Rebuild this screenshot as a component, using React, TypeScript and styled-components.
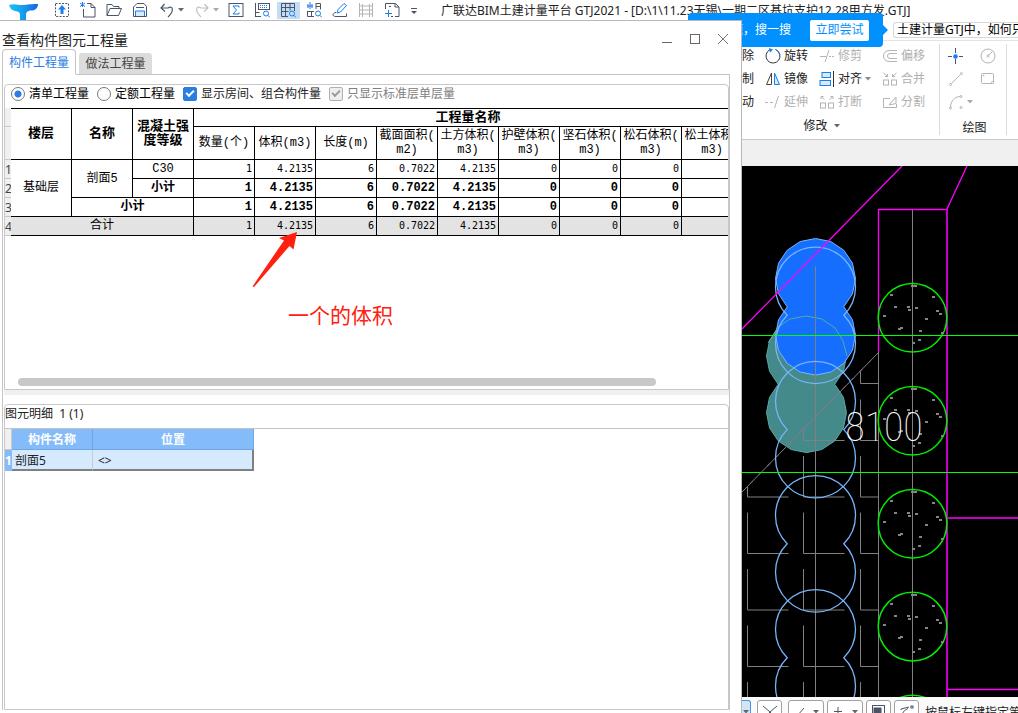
import React from "react";
import styled, { createGlobalStyle, css } from "styled-components";

const GlobalStyle = createGlobalStyle`
  *, *::before, *::after { box-sizing: border-box; }
  html, body { margin: 0; height: 100%; }
  body {
    overflow: hidden;
    background: #fff;
    color: #222;
    font: 12px/16px "Noto Sans", "Noto Sans CJK SC", sans-serif;
  }
  button, input { font: inherit; color: inherit; margin: 0; padding: 0; }
  svg { display: block; flex: none; }
`;

/* ---------- window shell ---------- */

const Shell = styled.div`
  display: flex;
  flex-direction: column;
  height: 100vh;
  overflow: hidden;
`;

const TitleBar = styled.header`
  display: flex;
  flex: none;
  height: 20px;
  padding-left: 9px;
  white-space: nowrap;
`;

const LogoBox = styled.div`
  width: 40px;
  padding-top: 4px;
`;

const BarButton = styled.button<{ $on?: boolean; $split?: boolean; $narrow?: boolean }>`
  display: flex;
  flex: none;
  align-items: center;
  justify-content: ${(p) => (p.$split ? "flex-start" : "center")};
  gap: 3px;
  width: ${(p) => (p.$split ? 35 : p.$narrow ? 18 : 26)}px;
  height: 20px;
  padding-left: ${(p) => (p.$split ? 6 : 0)}px;
  border: 0;
  background: ${(p) =>
    p.$on ? "linear-gradient(#c4ddf5, #c4ddf5) center / 23px 17px no-repeat" : "none"};
`;

const FileTitle = styled.h1`
  margin: 0 0 0 18px;
  font-size: 12px;
  font-weight: 400;
  line-height: 22px;
`;

const Body = styled.div`
  display: grid;
  flex: 1;
  min-height: 0;
  grid-template-columns: minmax(0, 742fr) minmax(276px, 276fr);
`;

/* ---------- quantity dialog ---------- */

const Dialog = styled.section`
  position: relative;
  z-index: 2;
  display: flex;
  flex-direction: column;
  min-width: 0;
  min-height: 0;
  padding: 0 11px 3px 2px;
  border-top: 1px solid #b8b8b8;
  border-right: 1px solid #b8b8b8;
  background: #fff;
`;

const DialogHead = styled.div`
  display: flex;
  flex: none;
  align-items: flex-end;
  justify-content: space-between;
  height: 28px;
`;

const DialogTitle = styled.h2`
  margin: 0;
  font-size: 14px;
  font-weight: 400;
  line-height: 18px;
`;

const WindowButtons = styled.div`
  display: flex;
  gap: 12px;
  padding-bottom: 2px;
`;

const WindowButton = styled.button`
  width: 16px;
  height: 16px;
  border: 0;
  background: none;
`;

const TabStrip = styled.div`
  display: flex;
  flex: none;
  align-items: flex-end;
  gap: 3px;
  height: 26px;
  border-bottom: 1px solid #c4c4c4;
`;

const Tab = styled.button<{ $active?: boolean }>`
  width: 73px;
  height: 21px;
  border: 0;
  border-radius: 3px 3px 0 0;
  background: #dcdcdc;
  color: #444;
  ${(p) =>
    p.$active &&
    css`
      width: 74px;
      height: 26px;
      margin-bottom: -1px;
      padding-top: 2px;
      border: 1px solid #c4c4c4;
      border-bottom-color: #fff;
      border-radius: 4px 4px 0 0;
      background: #fff;
      color: #2a7de1;
    `}
`;

const Panel = styled.div`
  display: flex;
  flex: 1;
  flex-direction: column;
  min-height: 0;
  padding: 9px 0 0 1px;
  border: solid #c4c4c8;
  border-width: 0 1px;
`;

const Group = styled.div`
  position: relative;
  display: flex;
  flex: 1;
  flex-direction: column;
  min-height: 0;
  overflow: hidden;
  border: 1px solid #c8c8c8;
  border-radius: 4px 4px 0 0;
`;

const Splitter = styled.div`
  flex: none;
  height: 14px;
  border-bottom: 9px solid #fff;
  background: #f0f0f0;
`;

const Options = styled.div`
  display: flex;
  flex: none;
  align-items: center;
  gap: 8px;
  height: 23px;
  padding: 0 0 6px 6px;
`;

const Option = styled.label<{ $color?: string }>`
  display: flex;
  align-items: center;
  gap: 4px;
  color: ${(p) => p.$color ?? "#000"};
  white-space: nowrap;
`;

const Radio = styled.input.attrs({ type: "radio" })`
  appearance: none;
  width: 14px;
  height: 14px;
  border: 1px solid #777;
  border-radius: 50%;
  background: #fff;
  &:checked {
    border-color: #777;
    background: radial-gradient(circle, #2a7de1 3px, #fff 4px);
  }
`;

const Check = styled.input.attrs({ type: "checkbox" })`
  appearance: none;
  position: relative;
  width: 14px;
  height: 14px;
  border: 1px solid #2a7de1;
  border-radius: 2px;
  background: #2a7de1;
  color: #fff;
  &:disabled {
    border-color: #b0b0b0;
    background: #eee;
    color: #999;
  }
  &::after {
    content: "";
    position: absolute;
    left: 2px;
    top: 2px;
    width: 8px;
    height: 5px;
    border: solid currentColor;
    border-width: 0 0 2px 2px;
    transform: rotate(-45deg);
  }
`;

const Grid = styled.table`
  flex: none;
  table-layout: fixed;
  width: 738px;
  border-spacing: 0;
  color: #000;
  font: 12px/14px "Liberation Mono", "Noto Sans CJK SC", monospace;
  col { width: 61px; }
  col:first-child { width: 6px; }
`;

const Cell = styled.td<{ $bold?: boolean; $num?: boolean; $shade?: boolean }>`
  height: 19px;
  padding: ${(p) => (p.$num ? "0 2px 0 0" : "0")};
  border: solid #000;
  border-width: 0 1px 1px 0;
  background: ${(p) => (p.$shade ? "#e3e3e3" : "#fff")};
  font-size: ${(p) => (p.$num && !p.$bold ? 10 : 12)}px;
  font-family: ${(p) => (p.$num && !p.$bold ? '"DejaVu Sans Mono", monospace' : "inherit")};
  font-weight: ${(p) => (p.$bold ? 700 : 400)};
  text-align: ${(p) => (p.$num ? "right" : "center")};
  vertical-align: middle;
`;

const HeadCell = styled.th<{ $top?: boolean; $h: number }>`
  height: ${(p) => p.$h}px;
  padding: 0 2px;
  border: solid #000;
  border-width: ${(p) => (p.$top ? "1px 1px 1px 0" : "0 1px 1px 0")};
  font-size: ${(p) => (p.$top ? 13 : 12)}px;
  font-weight: ${(p) => (p.$top ? 700 : 400)};
`;

const RowMark = styled.th`
  padding: 0;
  overflow: hidden;
  border: solid #c8c8c8;
  border-width: 0 0 1px;
  background: #f0f0f0;
  color: #444;
  font: 12px/16px "Noto Sans", sans-serif;
  vertical-align: bottom;
`;

const ScrollThumb = styled.div`
  flex: none;
  height: 8px;
  margin: auto 72px 3px 13px;
  border-radius: 4px;
  background: #c8c8c8;
`;

const Note = styled.p`
  position: absolute;
  left: 283px;
  top: 215px;
  margin: 0;
  color: #ff2010;
  font: 21px/28px "Noto Sans CJK SC", sans-serif;
`;

const NoteArrow = styled.svg`
  position: absolute;
  left: 245px;
  top: 145px;
`;

const DetailTitle = styled.h3`
  flex: none;
  height: 24px;
  margin: 0;
  border-bottom: 1px solid #c4c4c4;
  font-size: 12px;
  font-weight: 400;
  line-height: 18px;
  white-space: pre;
`;

const DetailTable = styled.table`
  flex: none;
  table-layout: fixed;
  width: 249px;
  border-spacing: 0;
  th, td { height: 21px; padding: 0; }
  thead th {
    padding-top: 1px;
    border: solid #6ba6ea;
    border-width: 0 1px 1px 0;
    background: #84bcfa;
    color: #fff;
  }
  thead th:first-child {
    border-color: #c8c8c8;
    background: #f0f0f0;
  }
  tbody th {
    background: #84bcfa;
    color: #fff;
    overflow: hidden;
  }
  td {
    padding: 2px 0 0 3px;
    border-right: 1px solid #c8ccd0;
    border-bottom: 2px solid #808080;
    background: #d5e9ff;
  }
  td:last-child {
    padding-left: 5px;
    border-right: 2px solid #808080;
  }
`;

/* ---------- main application on the right ---------- */

const Workspace = styled.main`
  position: relative;
  z-index: 1;
  display: flex;
  flex-direction: column;
  min-width: 0;
  min-height: 0;
`;

const SearchRow = styled.div`
  display: flex;
  flex: none;
  height: 21px;
  padding: 2px 0 2px 151px;
  border-bottom: 1px solid #e4e4e4;
`;

const SearchBox = styled.input`
  flex: 1;
  min-width: 0;
  padding-left: 3px;
  border: 1px solid #d8d8d8;
  border-right: 0;
  border-radius: 3px 0 0 3px;
  outline: 0;
  color: #000;
`;

const Promo = styled.div`
  position: absolute;
  left: -54px;
  top: -7px;
  display: flex;
  align-items: center;
  justify-content: flex-end;
  gap: 19px;
  width: 195px;
  height: 34px;
  padding-right: 14px;
  border-radius: 4px;
  background: #0091ff;
  color: #fff;
  &::after {
    content: "";
    position: absolute;
    left: 100%;
    top: 12px;
    border: 5px solid transparent;
    border-left-color: #0091ff;
    border-right: 0;
  }
`;

const PromoButton = styled.button`
  width: 59px;
  height: 21px;
  border: 0;
  border-radius: 2px;
  background: #fff;
  color: #0091ff;
`;

const Ribbon = styled.div`
  display: flex;
  flex: none;
  height: 99px;
  border-bottom: 1px solid #c8c8c8;
`;

const RibbonGroup = styled.div<{ $w: number }>`
  display: flex;
  flex: none;
  flex-direction: column;
  width: ${(p) => p.$w}px;
  margin: 3px 0 4px;
  border-right: 1px solid #dcdcdc;
`;

const ToolGrid = styled.div<{ $cols: string }>`
  display: grid;
  grid-template-columns: ${(p) => p.$cols};
  grid-auto-rows: 23px;
`;

const Tool = styled.button<{ $off?: boolean }>`
  display: flex;
  align-items: center;
  gap: 3px;
  border: 0;
  background: none;
  color: ${(p) => (p.$off ? "#b0b0b0" : "#222")};
  white-space: nowrap;
`;

const GroupLabel = styled.div`
  display: flex;
  align-items: center;
  justify-content: center;
  gap: 6px;
  padding: 4px 38px 0 0;
  line-height: 18px;
`;

const DrawLabel = styled(GroupLabel)`
  padding: 6px 0 0 3px;
`;

const DocStrip = styled.div`
  flex: none;
  height: 26px;
  background: #f0f0f0;
`;

const CanvasBox = styled.div`
  flex: 1;
  min-height: 0;
  background: #000;
`;

const StatusBar = styled.footer`
  display: flex;
  flex: none;
  gap: 3px;
  height: 16px;
  overflow: hidden;
  padding-top: 3px;
  background: #fafafa;
  white-space: nowrap;
`;

const StatusButton = styled.button<{ $w: number; $on?: boolean; $gap?: boolean }>`
  display: flex;
  flex: none;
  align-items: center;
  justify-content: space-evenly;
  width: ${(p) => p.$w}px;
  height: 24px;
  margin-right: ${(p) => (p.$gap ? 3 : 0)}px;
  border: 1px solid ${(p) => (p.$on ? "#4a90e2" : "#a0a0a0")};
  border-left-width: ${(p) => (p.$on ? 0 : 1)}px;
  border-radius: ${(p) => (p.$on ? "0 3px 3px 0" : "3px")};
  background: ${(p) => (p.$on ? "#d0e4fa" : "#fff")};
`;

const StatusText = styled.span`
  padding: 5px 0 0 3px;
`;

/* ---------- icons ---------- */

const INK = "#4a5568";
const BLUE = "#1a7df0";
const OFF = "#b4b4b4";

function Icon({ children, c = INK, size = 16 }: { children: React.ReactNode; c?: string; size?: number }) {
  return (
    <svg width={size} height={size} viewBox="0 0 16 16" fill="none" stroke={c} aria-hidden="true">
      {children}
    </svg>
  );
}

const Caret = ({ c = "#666" }: { c?: string }) => (
  <svg width="6" height="4" viewBox="0 0 6 4" fill={c} aria-hidden="true">
    <path d="M0 0h6L3 3.5z" />
  </svg>
);

const Magnifier = () => (
  <g stroke={BLUE}>
    <circle cx="12" cy="11.5" r="2.5" />
    <path d="M13.8 13.3L16 15.5" />
  </g>
);

const Logo = () => (
  <svg width="30" height="16" viewBox="0 0 30 16" aria-hidden="true">
    <defs>
      <linearGradient id="logo" x1="0" x2="1">
        <stop offset="0" stopColor="#18c5f2" />
        <stop offset="0.5" stopColor="#159cee" />
        <stop offset="1" stopColor="#1c62e8" />
      </linearGradient>
    </defs>
    <path
      fill="url(#logo)"
      d="M0 1C3-.2 6 0 9 .7s5 .3 8 0S26-.3 29 0c0 4-3 6.500-6 6.500-2 0-4 0-5 1.500-1 1-1 2-1 3V16h-6V11C11 8 9 7.500 6 7 3 6.500 1 4.500 0 1z"
    />
  </svg>
);

const barIcons: Record<string, React.ReactNode> = {
  upload: (
    <Icon>
      <rect x="1.500" y="1.500" width="13" height="13" strokeDasharray="2 1.300" />
      <path d="M8 3l4 4.500h-2.500V12h-3V7.500H4z" fill={BLUE} stroke="none" />
    </Icon>
  ),
  fresh: (
    <Icon>
      <path d="M7 1.500h4l4 4v9.500H3.500V7M11 1.500v4h4" />
      <path d="M2.500 0v5M0 1l5 3.500M5 1l-5 3.500" stroke={BLUE} />
    </Icon>
  ),
  open: (
    <Icon>
      <path d="M1 13.500v-11h5l1.500 2h5.500v2M1 13.500L4 6.500h11.500l-3 7z" />
    </Icon>
  ),
  save: (
    <Icon>
      <path d="M1.500 14.500V5l3.500-3.500h7l2.500 3v10z" />
      <path d="M4 5.500h8" />
      <path d="M3.500 14V9h9v5" stroke={BLUE} fill="#d5e9ff" />
    </Icon>
  ),
  undo: (
    <Icon>
      <path d="M5.500 2L2 6l4 3.500M2 6h7c5-3 6.500 3 0 9" strokeWidth="1.200" />
    </Icon>
  ),
  redo: (
    <Icon c="#c0c0c0">
      <path d="M10.500 2L14 6l-4 3.500M14 6H7C2 3 .5 9 7 15" strokeWidth="1.200" />
    </Icon>
  ),
  sum: (
    <Icon>
      <rect x="1" y="1.500" width="14" height="13" />
      <path d="M11 5.500V4H5l3.500 4L5 12h6v-1.500" stroke={BLUE} />
    </Icon>
  ),
  viewFormula: (
    <Icon>
      <path d="M1.500 1v14M1.500 14.500H7M1.500 10.500h4" />
      <rect x="4.500" y="1.500" width="11" height="6" />
      <path d="M6 3.500h8M6 5.500h8" stroke={BLUE} strokeDasharray="1 1" />
      <Magnifier />
    </Icon>
  ),
  viewGrid: (
    <Icon>
      <path d="M8 14.500H1.500v-13h13V9M1.500 5.500h13M1.500 9.500h7M5.500 1.500v13M10 1.500v7" />
      <Magnifier />
    </Icon>
  ),
  viewRebar: (
    <Icon>
      <path d="M10 1.500h4.500v6M10 1v6M10 4.500h4M1.500 9v5.500H8M5.500 9v5M1 9.500h7" />
      <path d="M4 0v7M1 4h6M2 2v4M6 2v4" stroke={BLUE} />
      <Magnifier />
    </Icon>
  ),
  edit: (
    <Icon>
      <path d="M5 11l1-3.500L12 1.500l2.500 2L8.500 10z" stroke={BLUE} />
      <path d="M4 10.500c-4 .5-4 4 0 4h10.500v-3" />
    </Icon>
  ),
  film: (
    <Icon c={OFF}>
      <path d="M1.500 1v14M14.500 1v14M4.500 2v13M11.500 2v13M1.500 4h13M1.500 8h13M1.500 12h13" />
    </Icon>
  ),
  addPage: (
    <Icon>
      <path d="M1.500 7V1.500h10L15 5v9.500h-4M11 1.500V5h4M5 4.500h2M7 14.500h2" />
      <path d="M4.500 8v7M1 11.500h7" stroke={BLUE} />
    </Icon>
  ),
  more: (
    <Icon>
      <path d="M5 6.500h6" />
      <path d="M5 9h6l-3 3z" fill={INK} stroke="none" />
    </Icon>
  ),
};

const toolIcons: Record<string, React.ReactNode> = {
  rotate: (
    <Icon c="#333">
      <path d="M10.500 1.500A7 7 0 1 1 5 1.700" />
      <path d="M4 0l4 1.500L5 4.500z" fill={BLUE} stroke="none" />
      <path d="M10.500 1.500A7 7 0 0 1 14.800 7" stroke={BLUE} />
    </Icon>
  ),
  trim: (
    <Icon c={OFF}>
      <path d="M1 8.500h6M6 14l4-12M10 8.500h2M13 8.500h2" />
    </Icon>
  ),
  offset: (
    <Icon c={OFF}>
      <path d="M15 2.500H7a5.500 5.500 0 0 0 0 11h8M15 5.500H8a2.500 2.500 0 0 0 0 5h7" />
    </Icon>
  ),
  mirror: (
    <Icon c="#444">
      <path d="M6.500 2v11.500H1.500z" />
      <path d="M9.500 2v11.500h5z" fill="#d5e9ff" stroke={BLUE} />
    </Icon>
  ),
  align: (
    <Icon c="#333">
      <path d="M14.500 0v16" />
      <rect x="3" y="1.500" width="8.500" height="5" fill="#d5e9ff" stroke={BLUE} />
      <rect x="1" y="9.500" width="10.500" height="5" fill="#d5e9ff" stroke={BLUE} />
    </Icon>
  ),
  merge: (
    <Icon c={OFF}>
      <rect x="1.500" y="9" width="5" height="5" />
      <rect x="9.500" y="9" width="5" height="5" />
      <path d="M1.500 2l4 3.500M5.500 3v2.500H3M14.500 2l-4 3.500M10.500 3v2.500H13" />
    </Icon>
  ),
  extend: (
    <Icon c={OFF}>
      <path d="M0 8.500h3M5 8.500h3M9.500 14l4-12" />
    </Icon>
  ),
  breakup: (
    <Icon c={OFF}>
      <rect x="1.500" y="9" width="5" height="5" />
      <rect x="9.500" y="9" width="5" height="5" />
      <path d="M5.500 5.500L2 2.500M2 5V2.500h2.500M10.500 5.500L14 2.500M14 5V2.500h-2.500" />
    </Icon>
  ),
  split: (
    <Icon c={OFF}>
      <path d="M8 4.500H1.500v9h13V10M7 11l7-8v6.500L7 11" />
    </Icon>
  ),
  point: (
    <Icon>
      <path d="M7.500 0v5M7.500 11v5M0 8.500h4M11 8.500h4" />
      <circle cx="7.500" cy="8.500" r="2.300" fill={BLUE} stroke="none" />
    </Icon>
  ),
  circle: (
    <Icon c={OFF}>
      <circle cx="8" cy="8" r="7" />
      <circle cx="8" cy="8" r="1" />
      <path d="M9 7l3-3" />
    </Icon>
  ),
  line: (
    <Icon c={OFF}>
      <circle cx="2.500" cy="13.500" r="1" />
      <circle cx="13.500" cy="2.500" r="1" />
      <path d="M3.500 12.500l9-9" />
    </Icon>
  ),
  rect: (
    <Icon c={OFF}>
      <rect x="1.500" y="2.500" width="12" height="10" rx="1" />
      <circle cx="3.500" cy="4.500" r=".5" />
      <circle cx="12.500" cy="11.500" r="1" fill="#fff" />
    </Icon>
  ),
  arc: (
    <Icon c={OFF}>
      <circle cx="2.500" cy="14" r="1" />
      <circle cx="13" cy="2.500" r="1" />
      <circle cx="13" cy="13.500" r="1" />
      <path d="M2.500 13C3 7 6 3 12 2.500" />
    </Icon>
  ),
};

/* ---------- drawing ---------- */

const PILE_X = 815.5;
const R = 40;
const HALF = 28.3;

/* Outline of two overlapping round piles; upper centre is (cx, cy). */
const pilePath = (cx: number, cy: number) =>
  `M${cx - HALF} ${cy + HALF}A${R} ${R} 0 1 1 ${cx + HALF} ${cy + HALF}A${R} ${R} 0 1 1 ${cx - HALF} ${cy + HALF}Z`;

/* The same outline as a coarse polygon, for highlighted solids. */
const pilePoints = (cx: number, cy: number) => {
  const pts: string[] = [];
  for (let k = -6; k <= 6; k++) {
    const a = (k * Math.PI) / 8;
    pts.push(`${cx + R * Math.sin(a)},${cy - R * Math.cos(a)}`);
  }
  for (let k = -6; k <= 6; k++) {
    const a = (k * Math.PI) / 8;
    pts.push(`${cx - R * Math.sin(a)},${cy + 2 * HALF + R * Math.cos(a)}`);
  }
  return pts.join(" ");
};

const grains = [
  [0, -32], [3, -32], [-21, -23], [21, -21], [-17, -11], [-4, -11], [-3, -8], [4, -10], [25, -7],
  [28, -4], [-28, -2], [14, 1], [-13, 11], [-11, 10], [8, 13], [30, 15], [7, 22], [1, 25],
];

const brackets: [number, number, number][] = [
  [860.5, 383.5, 12],
  [803.5, 440.5, 12], [860.5, 440.5, 41],
  [747.5, 497, 10], [803.5, 497, 41], [860.5, 497, 41],
  ...[553.5, 610, 666.5, 723].flatMap((y) =>
    [747.5, 803.5, 860.5].map((x): [number, number, number] => [x, y, 41])
  ),
];

const Drawing = () => (
  <svg width="100%" height="100%" viewBox="742 166 276 531" preserveAspectRatio="xMinYMin slice" fill="none">
    <polygon points={pilePoints(806.5, 356)} fill="#458a8a" stroke="#58a8a4" />
    <polygon points={pilePoints(PILE_X, 278.5)} fill="#166eff" stroke="#7ab4ff" />
    <polyline points="768,343 778,327 790,319 806,316 822,319 835,328 843,341 847,356" stroke="#58a8a4" />
    <g stroke="#808080">
      {brackets.map(([x, y, h]) => (
        <path key={`${x}-${y}`} d={`M${x} ${y - h}V${y}H${x > 860 ? 878 : x + 41}`} />
      ))}
      <path d="M878.500 352V697M912.500 209V697M815.500 266V697M742 492L878 353" />
    </g>
    <path d="M742 492L878 353" stroke="#a060a0" strokeDasharray="4 8" />
    {[287, 401.3, 515.5, 629.5].map((y) => (
      <path key={y} d={pilePath(PILE_X, y)} stroke="#78b4fa" strokeWidth="1.300" />
    ))}
    <g stroke="#f0f">
      <path d="M742 329L902 166M947 209L967 166M878.500 352V209.500H947M947 689.500H1018" strokeWidth="1.300" />
      <path d="M947 209V697M947 518H1018" stroke="#c400c4" strokeWidth="2" />
    </g>
    {[317.8, 420.8, 523.8, 626.6, 729.5].map((y) => (
      <g key={y}>
        <circle cx="912.500" cy={y} r="34.300" stroke="#0e0" strokeWidth="1.500" />
        {grains.map(([dx, dy]) => (
          <rect key={`${dx},${dy}`} x={911 + dx} y={Math.round(y + dy - 1)} width="3" height="2" fill="#858585" />
        ))}
      </g>
    ))}
    <path d="M742 335.500H1018M742 472.500H1018" stroke="#0f0" />
    <text
      x="884"
      y="441"
      fill="#fff"
      fontSize="40"
      textAnchor="middle"
      fontFamily="'Liberation Sans Narrow', 'Roboto Condensed', Roboto, sans-serif"
      fontWeight="100"
    >
      8100
    </text>
  </svg>
);

/* ---------- data ---------- */

const measures = [
  "数量(个)", "体积(m3)", "长度(m)", "截面面积(m2)", "土方体积(m3)",
  "护壁体积(m3)", "坚石体积(m3)", "松石体积(m3)", "松土体积(m3)",
];
const values = ["1", "4.2135", "6", "0.7022", "4.2135", "0", "0", "0", ""];

const Values = ({ bold, shade }: { bold?: boolean; shade?: boolean }) => (
  <>
    {values.map((v, i) => (
      <Cell key={i} $num $bold={bold} $shade={shade}>{v}</Cell>
    ))}
  </>
);

const QuantityTable = () => (
  <Grid>
    <colgroup>
      {Array.from({ length: 13 }, (_, i) => <col key={i} />)}
    </colgroup>
    <thead>
      <tr>
        <RowMark />
        <HeadCell $top $h={19} rowSpan={2}>楼层</HeadCell>
        <HeadCell $top $h={19} rowSpan={2}>名称</HeadCell>
        <HeadCell $top $h={19} rowSpan={2}>混凝土强度等级</HeadCell>
        <HeadCell $top $h={19} colSpan={9}>工程量名称</HeadCell>
      </tr>
      <tr>
        <RowMark />
        {measures.map((m) => {
          const long = m.length > 7;
          return (
            <HeadCell key={m} $h={33}>
              {long ? <>{m.slice(0, 5)}<br />{m.slice(5)}</> : m}
            </HeadCell>
          );
        })}
      </tr>
    </thead>
    <tbody>
      <tr>
        <RowMark>1</RowMark>
        <Cell rowSpan={3}>基础层</Cell>
        <Cell rowSpan={2}>剖面5</Cell>
        <Cell>C30</Cell>
        <Values />
      </tr>
      <tr>
        <RowMark>2</RowMark>
        <Cell $bold>小计</Cell>
        <Values bold />
      </tr>
      <tr>
        <RowMark>3</RowMark>
        <Cell $bold colSpan={2}>小计</Cell>
        <Values bold />
      </tr>
      <tr>
        <RowMark>4</RowMark>
        <Cell $shade colSpan={3}>合计</Cell>
        <Values shade />
      </tr>
    </tbody>
  </Grid>
);

/* ---------- page ---------- */

export default function App() {
  return (
    <Shell>
      <GlobalStyle />
      <TitleBar>
        <LogoBox><Logo /></LogoBox>
        {["upload", "fresh", "open", "save"].map((k) => (
          <BarButton key={k} aria-label={k}>{barIcons[k]}</BarButton>
        ))}
        <BarButton $split aria-label="undo">{barIcons.undo}<Caret /></BarButton>
        <BarButton $split aria-label="redo">{barIcons.redo}<Caret c="#aaa" /></BarButton>
        {["sum", "viewFormula", "viewGrid", "viewRebar", "edit", "film", "addPage"].map((k) => (
          <BarButton key={k} aria-label={k} $on={k === "viewGrid"}>{barIcons[k]}</BarButton>
        ))}
        <BarButton $narrow aria-label="more">{barIcons.more}</BarButton>
        <FileTitle>广联达BIM土建计量平台 GTJ2021 - [D:\1\11.23无锡\一期二区基坑支护12.28甲方发.GTJ]</FileTitle>
      </TitleBar>

      <Body>
        <Dialog>
          <DialogHead>
            <DialogTitle>查看构件图元工程量</DialogTitle>
            <WindowButtons>
              <WindowButton aria-label="minimize"><Icon c="#666"><path d="M4 11.500h10" /></Icon></WindowButton>
              <WindowButton aria-label="maximize"><Icon c="#666"><rect x="4.500" y="3.500" width="9" height="9" /></Icon></WindowButton>
              <WindowButton aria-label="close"><Icon c="#777"><path d="M4 3l10 10M14 3L4 13" /></Icon></WindowButton>
            </WindowButtons>
          </DialogHead>
          <TabStrip>
            <Tab $active>构件工程量</Tab>
            <Tab>做法工程量</Tab>
          </TabStrip>
          <Panel>
            <Group>
              <Options>
                <Option><Radio name="mode" defaultChecked />清单工程量</Option>
                <Option><Radio name="mode" />定额工程量</Option>
                <Option $color="#222"><Check defaultChecked />显示房间、组合构件量</Option>
                <Option $color="#808080"><Check defaultChecked disabled />只显示标准层单层量</Option>
              </Options>
              <QuantityTable />
              <NoteArrow width="50" height="60" viewBox="250 230 50 60" aria-hidden="true">
                <path d="M297 232L279 238L284 240.500L252.500 286.500L254 287L289.500 246L293.500 249.500Z" fill="#ff2010" />
              </NoteArrow>
              <Note>一个的体积</Note>
              <ScrollThumb />
            </Group>
            <Splitter />
            <Group>
              <DetailTitle>图元明细  1 (1)</DetailTitle>
              <DetailTable>
                <colgroup>
                  <col style={{ width: 7 }} />
                  <col style={{ width: 81 }} />
                  <col />
                </colgroup>
                <thead>
                  <tr><th /><th>构件名称</th><th>位置</th></tr>
                </thead>
                <tbody>
                  <tr><th>1</th><td>剖面5</td><td>&lt;&gt;</td></tr>
                </tbody>
              </DetailTable>
            </Group>
          </Panel>
        </Dialog>

        <Workspace>
          <SearchRow>
            <SearchBox aria-label="搜索" defaultValue="土建计量GTJ中，如何只" />
          </SearchRow>
          <Promo>
            <span>有问题，搜一搜</span>
            <PromoButton>立即尝试</PromoButton>
          </Promo>
          <Ribbon>
            <RibbonGroup $w={198}>
              <ToolGrid $cols="23px 54px 63px 57px">
                <Tool>除</Tool>
                <Tool>{toolIcons.rotate}旋转</Tool>
                <Tool $off>{toolIcons.trim}修剪</Tool>
                <Tool $off>{toolIcons.offset}偏移</Tool>
                <Tool>制</Tool>
                <Tool>{toolIcons.mirror}镜像</Tool>
                <Tool>{toolIcons.align}对齐<Caret c="#888" /></Tool>
                <Tool $off>{toolIcons.merge}合并</Tool>
                <Tool>动</Tool>
                <Tool $off>{toolIcons.extend}延伸</Tool>
                <Tool $off>{toolIcons.breakup}打断</Tool>
                <Tool $off>{toolIcons.split}分割</Tool>
              </ToolGrid>
              <GroupLabel>修改<Caret /></GroupLabel>
            </RibbonGroup>
            <RibbonGroup $w={67}>
              <ToolGrid $cols="8px 32px 27px">
                <span /><Tool aria-label="point">{toolIcons.point}</Tool><Tool aria-label="circle">{toolIcons.circle}</Tool>
                <span /><Tool aria-label="line">{toolIcons.line}</Tool><Tool aria-label="rectangle">{toolIcons.rect}</Tool>
                <span /><Tool aria-label="arc">{toolIcons.arc}<Caret c="#aaa" /></Tool>
              </ToolGrid>
              <DrawLabel>绘图</DrawLabel>
            </RibbonGroup>
          </Ribbon>
          <DocStrip />
          <CanvasBox><Drawing /></CanvasBox>
          <StatusBar>
            <StatusButton $w={9} $on $gap aria-label="mode"><Caret /></StatusButton>
            <StatusButton $w={25} $gap aria-label="intersection">
              <Icon><path d="M1 2l7 6 7-6M8 8l-6 6M8 8l6 6" /></Icon>
            </StatusButton>
            <StatusButton $w={36} aria-label="line snap">
              <Icon><path d="M4 12l7-8M4 9v3h3" /></Icon><Caret />
            </StatusButton>
            <StatusButton $w={36} aria-label="point snap">
              <Icon><path d="M6 3v9M2 7.500h8" /></Icon><Caret />
            </StatusButton>
            <StatusButton $w={25} aria-label="layers">
              <Icon><rect x="1.500" y="1.500" width="12" height="12" /><rect x="3" y="4" width="7" height="9" fill={INK} /></Icon>
            </StatusButton>
            <StatusButton $w={25} aria-label="arc snap">
              <Icon><path d="M2 14C3 9 5 6 9 4.500M2 6v-1L10 3" /><rect x="12" y="2" width="2" height="2" /></Icon>
            </StatusButton>
            <StatusText>按鼠标左键指定第一个角点</StatusText>
          </StatusBar>
        </Workspace>
      </Body>
    </Shell>
  );
}
